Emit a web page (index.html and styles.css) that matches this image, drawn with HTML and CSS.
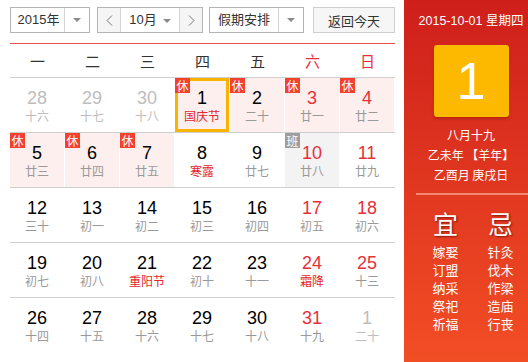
FILE: index.html
```html
<!DOCTYPE html>
<html lang="zh-CN">
  <head>
    <meta charset="UTF-8" />
    <title>万年历</title>
    <link rel="stylesheet" href="styles.css">
  </head>
  <body>
    <div class="calendar">
      <div class="toolbar">
        <div class="select year-select">
          <span class="select-text">2015年</span>
          <span class="select-arrow"></span>
        </div>
        <div class="month-group">
          <span class="month-btn">
            <svg width="7" height="11" viewBox="0 0 7 11"><polyline points="6,0.5 1,5.5 6,10.5" fill="none" stroke="#777" stroke-width="1" /></svg>
          </span>
          <span class="month-text">10月<i class="small-arrow"></i></span>
          <span class="month-btn">
            <svg width="7" height="11" viewBox="0 0 7 11"><polyline points="1,0.5 6,5.5 1,10.5" fill="none" stroke="#777" stroke-width="1" /></svg>
          </span>
        </div>
        <div class="select holiday-select">
          <span class="select-text">假期安排</span>
          <span class="select-arrow"></span>
        </div>
        <button class="btn-today">返回今天</button>
      </div>

      <div class="week-head">
        <span>一</span><span>二</span><span>三</span><span>四</span><span>五</span>
        <span class="red">六</span><span class="red">日</span>
      </div>

      <div class="week">
        <div class="day other"><b class="num">28</b><span class="lunar">十六</span></div>
        <div class="day other"><b class="num">29</b><span class="lunar">十七</span></div>
        <div class="day other"><b class="num">30</b><span class="lunar">十八</span></div>
        <div class="day rest today"><span class="tag">休</span><b class="num">1</b><span class="lunar fest">国庆节</span></div>
        <div class="day rest"><span class="tag">休</span><b class="num">2</b><span class="lunar">二十</span></div>
        <div class="day rest weekend"><span class="tag">休</span><b class="num">3</b><span class="lunar">廿一</span></div>
        <div class="day rest weekend"><span class="tag">休</span><b class="num">4</b><span class="lunar">廿二</span></div>
      </div>
      <div class="week">
        <div class="day rest"><span class="tag">休</span><b class="num">5</b><span class="lunar">廿三</span></div>
        <div class="day rest"><span class="tag">休</span><b class="num">6</b><span class="lunar">廿四</span></div>
        <div class="day rest"><span class="tag">休</span><b class="num">7</b><span class="lunar">廿五</span></div>
        <div class="day"><b class="num">8</b><span class="lunar fest">寒露</span></div>
        <div class="day"><b class="num">9</b><span class="lunar">廿七</span></div>
        <div class="day work weekend"><span class="tag">班</span><b class="num">10</b><span class="lunar">廿八</span></div>
        <div class="day weekend"><b class="num">11</b><span class="lunar">廿九</span></div>
      </div>
      <div class="week">
        <div class="day"><b class="num">12</b><span class="lunar">三十</span></div>
        <div class="day"><b class="num">13</b><span class="lunar">初一</span></div>
        <div class="day"><b class="num">14</b><span class="lunar">初二</span></div>
        <div class="day"><b class="num">15</b><span class="lunar">初三</span></div>
        <div class="day"><b class="num">16</b><span class="lunar">初四</span></div>
        <div class="day weekend"><b class="num">17</b><span class="lunar">初五</span></div>
        <div class="day weekend"><b class="num">18</b><span class="lunar">初六</span></div>
      </div>
      <div class="week">
        <div class="day"><b class="num">19</b><span class="lunar">初七</span></div>
        <div class="day"><b class="num">20</b><span class="lunar">初八</span></div>
        <div class="day"><b class="num">21</b><span class="lunar fest">重阳节</span></div>
        <div class="day"><b class="num">22</b><span class="lunar">初十</span></div>
        <div class="day"><b class="num">23</b><span class="lunar">十一</span></div>
        <div class="day weekend"><b class="num">24</b><span class="lunar fest">霜降</span></div>
        <div class="day weekend"><b class="num">25</b><span class="lunar">十三</span></div>
      </div>
      <div class="week last">
        <div class="day"><b class="num">26</b><span class="lunar">十四</span></div>
        <div class="day"><b class="num">27</b><span class="lunar">十五</span></div>
        <div class="day"><b class="num">28</b><span class="lunar">十六</span></div>
        <div class="day"><b class="num">29</b><span class="lunar">十七</span></div>
        <div class="day"><b class="num">30</b><span class="lunar">十八</span></div>
        <div class="day weekend"><b class="num">31</b><span class="lunar">十九</span></div>
        <div class="day other"><b class="num">1</b><span class="lunar">二十</span></div>
      </div>
    </div>

    <div class="panel">
      <div class="panel-date">2015-10-01 星期四</div>
      <div class="big-day">1</div>
      <div class="panel-lunar">
        <p>八月十九</p>
        <p>乙未年 【羊年】</p>
        <p>乙酉月 庚戌日</p>
      </div>
      <div class="panel-line"></div>
      <div class="almanac">
        <div class="almanac-col">
          <h3>宜</h3>
          <p>嫁娶</p><p>订盟</p><p>纳采</p><p>祭祀</p><p>祈福</p>
        </div>
        <div class="almanac-col">
          <h3>忌</h3>
          <p>针灸</p><p>伐木</p><p>作梁</p><p>造庙</p><p>行丧</p>
        </div>
      </div>
    </div>
  </body>
</html>
```

FILE: styles.css
```css
body {
  margin: 0;
  font-family: "Liberation Sans", Arial, "Noto Sans CJK SC", sans-serif;
  color: #000;
  background-color: #fff;
  display: flex;
  width: 528px;
  height: 362px;
  overflow: hidden;
}

.calendar {
  width: 385px;
  padding: 7px 0 0 10px;
  margin-right: 9px;
}

/* Top controls */
.toolbar {
  display: flex;
  height: 26px;
  margin-bottom: 10px;
  font-size: 13px;
  color: #333;
}

.select {
  display: flex;
  box-sizing: border-box;
  height: 26px;
  border: 1px solid #b4b4b4;
  background-color: #fff;
}

.select-text {
  flex: 1;
  line-height: 24px;
  text-align: center;
}

.select-arrow {
  width: 24px;
  border-left: 1px solid #d4d4d4;
  position: relative;
}

.select-arrow::after {
  content: "";
  position: absolute;
  left: 8px;
  top: 10px;
  border-left: 4px solid transparent;
  border-right: 4px solid transparent;
  border-top: 4px solid #8a8a8a;
}

.year-select {
  width: 80px;
  margin-right: 7px;
}

.year-select .select-text {
  padding-left: 2px;
}

.holiday-select {
  width: 95px;
  margin-right: 9px;
}

.month-group {
  display: flex;
  box-sizing: border-box;
  width: 106px;
  height: 26px;
  border: 1px solid #b4b4b4;
  margin-right: 6px;
}

.month-btn {
  width: 22px;
  display: flex;
  align-items: center;
  justify-content: center;
  background-color: #f5f5f5;
}

.month-text {
  flex: 1;
  border-left: 1px solid #d4d4d4;
  border-right: 1px solid #d4d4d4;
  line-height: 24px;
  text-align: center;
  background-color: #fff;
}

.small-arrow {
  display: inline-block;
  margin-left: 6px;
  vertical-align: middle;
  border-left: 4px solid transparent;
  border-right: 4px solid transparent;
  border-top: 4px solid #8a8a8a;
}

.btn-today {
  box-sizing: border-box;
  width: 82px;
  height: 26px;
  padding: 0;
  border: 1px solid #cfcfcf;
  background-color: #f6f6f6;
  font-family: inherit;
  font-size: 13px;
  color: #333;
}

/* Weekday header */
.week-head {
  display: grid;
  grid-template-columns: repeat(7, 55px);
  border-top: 1px solid #e8524a;
  border-bottom: 1px solid #cfcfcf;
  height: 33px;
  line-height: 33px;
  text-align: center;
  font-size: 15px;
  color: #333;
  font-family: "Noto Sans CJK SC", sans-serif;
}

.week-head .red {
  color: #e8303a;
}

/* Day cells */
.week {
  display: grid;
  grid-template-columns: repeat(7, 55px);
  border-bottom: 1px solid #cfcfcf;
}

.week.last {
  border-bottom: none;
}

.day {
  position: relative;
  height: 54px;
  margin-right: 1px;
  text-align: center;
}

.num {
  display: block;
  padding-top: 10px;
  font-size: 18px;
  font-weight: normal;
  line-height: 20px;
}

.lunar {
  display: block;
  font-size: 12px;
  line-height: 16px;
  color: #999;
  font-family: "Noto Sans CJK SC", sans-serif;
}

.lunar.fest {
  color: #e5262e;
}

.weekend .num {
  color: #e8303a;
}

.other .num,
.other .lunar {
  color: #bdbdbd;
}

.rest {
  background-color: #fdefee;
}

.work {
  background-color: #f3f3f3;
}

.today {
  box-shadow: inset 0 0 0 3px #f8b400;
}

.tag {
  position: absolute;
  top: 0;
  left: 0;
  width: 15px;
  height: 15px;
  line-height: 15px;
  font-size: 12px;
  color: #fff;
  background-color: #f3402f;
  font-family: "Noto Sans CJK SC", sans-serif;
}

.work .tag {
  background-color: #9d9d9d;
}

/* Right side panel */
.panel {
  flex: 1;
  box-sizing: border-box;
  padding-left: 10px;
  color: #fff;
  text-align: center;
  background: linear-gradient(#ce1f1b, #f24e25);
}

.panel-date {
  margin-top: 13px;
  font-size: 12.5px;
  line-height: 16px;
}

.big-day {
  width: 75px;
  height: 72px;
  margin: 16px auto 0;
  border-radius: 3px;
  background-color: #fdb800;
  box-shadow: 0 2px 3px rgba(120, 20, 0, 0.35);
  font-size: 52px;
  line-height: 72px;
}

.panel-lunar {
  margin-top: 8px;
  font-size: 12px;
  line-height: 20px;
  font-family: "Noto Sans CJK SC", sans-serif;
}

.panel-lunar p {
  margin: 0;
}

.panel-line {
  height: 2px;
  margin: 8px 0 0 2px;
  background-color: rgba(255, 190, 170, 0.6);
}

.almanac {
  display: grid;
  grid-template-columns: 55px 55px;
  margin-left: 4px;
  font-family: "Noto Sans CJK SC", sans-serif;
}

.almanac h3 {
  margin: 13px 0 5px;
  font-size: 25px;
  font-weight: normal;
  line-height: 30px;
  text-shadow: 1px 1px 2px rgba(90, 0, 0, 0.7);
}

.almanac p {
  margin: 0;
  font-size: 13px;
  line-height: 18px;
}
```
